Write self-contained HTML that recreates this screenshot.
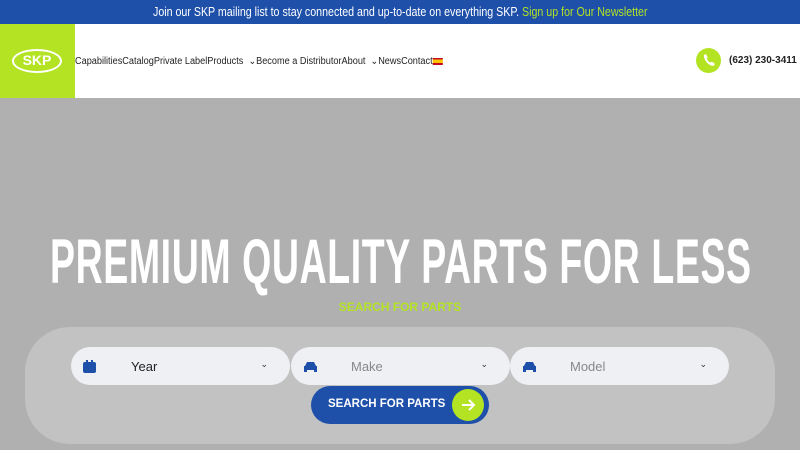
<!DOCTYPE html>
<html><head><meta charset="utf-8"><style>
*{margin:0;padding:0;box-sizing:border-box}
body{width:800px;height:450px;overflow:hidden;font-family:"Liberation Sans",sans-serif;background:#b0b0b0;position:relative}
.top{position:absolute;left:0;top:0;width:800px;height:24px;background:#1e50aa;color:#fff;font-size:12.5px;line-height:24px}
.top .in{position:absolute;left:153px;white-space:nowrap;transform-origin:0 0;transform:scaleX(0.852)}
.top span{color:#b3e322}
.hdr{position:absolute;left:0;top:24px;width:800px;height:74px;background:#fff}
.logo{position:absolute;left:0;top:0;width:75px;height:74px;background:#b3e322}
.logo div{position:absolute;left:12px;top:25px;width:50px;height:24px;border:2.5px solid #fff;border-radius:50%;color:#fff;font-weight:bold;font-size:14px;text-align:center;line-height:19px}
.nav{position:absolute;left:75px;top:32px;font-size:10px;color:#222;white-space:nowrap;transform-origin:0 0;transform:scaleX(0.915)}
.ph{position:absolute;left:696px;top:24px;width:25px;height:25px;border-radius:50%;background:#b3e322}
.num{position:absolute;left:729px;top:31px;font-size:10px;font-weight:bold;color:#222}
h1{position:absolute;left:50px;top:226px;font-size:63px;color:#fff;font-weight:bold;white-space:nowrap;transform-origin:0 0;transform:scaleX(0.595);letter-spacing:1px}
.sfp{position:absolute;left:0;width:800px;top:300px;text-align:center;color:#b3e322;font-weight:bold;font-size:12px}
.panel{position:absolute;left:25px;top:327px;width:750px;height:117px;background:#c2c2c2;border-radius:45px}
.sel{position:absolute;top:347px;height:38px;width:219px;background:#eef0f4;border-radius:19px;font-size:13px}
.sel .t{position:absolute;left:60px;top:12px}
.sel .c{position:absolute;right:22px;top:12px;font-size:9px;color:#333}
.btn{position:absolute;left:311px;top:386px;width:178px;height:38px;border-radius:19px;background:#1e50aa;color:#fff;font-weight:bold;font-size:11.5px}
.btn .t{position:absolute;left:17px;top:12px}
.btn .a{position:absolute;left:141px;top:3px;width:32px;height:32px;border-radius:50%;background:#b3e322}
</style></head><body>
<div class="top"><div class="in">Join our SKP mailing list to stay connected and up-to-date on everything SKP. <span>Sign up for Our Newsletter</span></div></div>
<div class="hdr"><div class="logo"><div>SKP</div></div>
<div class="nav">CapabilitiesCatalogPrivate LabelProducts &nbsp;⌄Become a DistributorAbout &nbsp;⌄NewsContact<span style="display:inline-block;width:11px;height:7px;background:linear-gradient(#c60b1e 25%,#ffc400 25% 75%,#c60b1e 75%);vertical-align:middle"></span></div>
<div class="ph"><svg width="25" height="25" viewBox="0 0 25 25"><path d="M8 7c1-1 2-1 2.5 0l1 2c.3.6 0 1-.5 1.5-.5.5 1.5 3.5 3.5 4 .5-.5 1-.8 1.5-.5l2 1c1 .5 1 1.5 0 2.5-3 2-11-5-10-10.5z" fill="#fff"/></svg></div>
<div class="num">(623) 230-3411</div></div>
<h1>PREMIUM QUALITY PARTS FOR LESS</h1>
<div class="sfp">SEARCH FOR PARTS</div>
<div class="panel"></div>
<div class="sel" style="left:71px"><svg style="position:absolute;left:12px;top:13px" width="13" height="13"><rect x="0" y="2" width="13" height="11" rx="2" fill="#1e50aa"/><rect x="3" y="0" width="2" height="4" fill="#1e50aa"/><rect x="8" y="0" width="2" height="4" fill="#1e50aa"/></svg><span class="t" style="color:#222">Year</span><span class="c">⌄</span></div>
<div class="sel" style="left:291px"><svg style="position:absolute;left:12px;top:14px" width="15" height="11"><path d="M2 5l2-4h7l2 4h1v6h-3v-2H4v2H1V5z" fill="#1e50aa"/></svg><span class="t" style="color:#888">Make</span><span class="c">⌄</span></div>
<div class="sel" style="left:510px"><svg style="position:absolute;left:12px;top:14px" width="15" height="11"><path d="M2 5l2-4h7l2 4h1v6h-3v-2H4v2H1V5z" fill="#1e50aa"/></svg><span class="t" style="color:#888">Model</span><span class="c">⌄</span></div>
<div class="btn"><span class="t">SEARCH FOR PARTS</span><div class="a"><svg width="32" height="32"><path d="M10 16h12M17 11l5 5-5 5" stroke="#fff" stroke-width="2" fill="none"/></svg></div></div>
</body></html>
